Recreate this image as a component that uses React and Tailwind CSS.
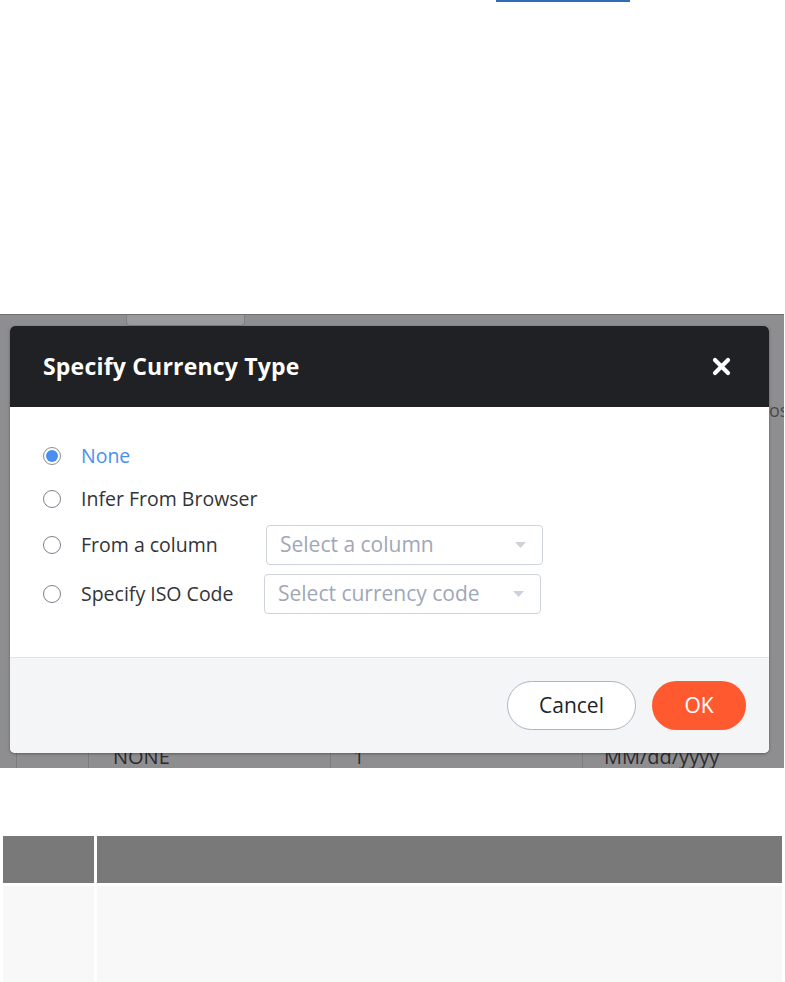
import React, { useState } from "react";

const font = { fontFamily: "'Open Sans', Lato, sans-serif" };

function Radio({ checked }) {
  return (
    <span
      className={
        "flex h-[18px] w-[18px] shrink-0 items-center justify-center rounded-full border-[1.5px] bg-white " +
        (checked ? "border-[#8a8d94]" : "border-[#7d818a]")
      }
    >
      {checked && <span className="h-[12px] w-[12px] rounded-full bg-[#4a8ff0]" />}
    </span>
  );
}

function Select({ placeholder, shift }) {
  return (
    <div
      className={
        "flex h-[40px] w-[277px] items-center justify-between rounded-[4px] border border-[#cfd3db] bg-white pl-[13px] pr-[16px] " +
        (shift ? "-ml-[2px]" : "")
      }
    >
      <span className="text-[21px] text-[#a0a7b8]">{placeholder}</span>
      <svg width="11" height="6" viewBox="0 0 11 6">
        <path d="M0 0h11L5.5 6z" fill="#cdd1d9" />
      </svg>
    </div>
  );
}

export default function App() {
  const [choice, setChoice] = useState("none");

  const options = [
    { id: "none", label: "None", cls: "h-[22px]" },
    { id: "browser", label: "Infer From Browser", cls: "mt-[21px] h-[22px]" },
    { id: "column", label: "From a column", select: "Select a column", cls: "mt-[15px] h-[40px]" },
    { id: "iso", label: "Specify ISO Code", select: "Select currency code", shift: true, cls: "mt-[9px] h-[40px]" },
  ];

  return (
    <div className="min-h-[982px] bg-white" style={font}>
      {/* link underline cut off at the top */}
      <div className="ml-[496px] h-[2px] w-[134px] bg-[#2f6db5]" />

      {/* screenshot of the dialog */}
      <div className="relative mt-[312px] h-[454px] w-[784px] overflow-hidden border-t border-[#6f6f72] bg-[#8e8e90]">
        {/* table behind the dialog */}
        <div className="flex h-full flex-col">
          <div className="ml-[126px] h-[11px] w-[119px] rounded-b-[4px] border-x border-b border-[#7d7d80] bg-[#9b9b9d]" />
          <div className="flex flex-1 justify-end pt-[75px]">
            <span className="w-[15px] overflow-hidden text-[18px] leading-none text-[#4a4a4c]">os</span>
          </div>
          <div className="flex h-[28px] items-end text-[20px] leading-none text-[#2b2b2e]">
            <div className="h-full w-[16px]" />
            <div className="h-full w-[72px] border-l border-[#7c7c7e]" />
            <div className="h-full w-[242px] border-l border-[#7c7c7e] pl-[24px] pt-[7px]">NONE</div>
            <div className="h-full w-[252px] border-l border-[#7c7c7e] pl-[22px] pt-[7px]">1</div>
            <div className="h-full flex-1 border-l border-[#7c7c7e] pl-[21px] pt-[7px]">MM/dd/yyyy</div>
          </div>
        </div>

        {/* dialog */}
        <div className="absolute left-[10px] top-[11px] flex h-[427px] w-[759px] flex-col overflow-hidden rounded-[5px] bg-white shadow-[0_1px_3px_rgba(0,0,0,0.35)]">
          <div className="flex h-[81px] shrink-0 items-center justify-between bg-[#202124] pl-[33px] pr-[38px]">
            <h2 className="text-[23px] font-bold tracking-[0.2px] text-white">Specify Currency Type</h2>
            <svg width="19" height="19" viewBox="0 0 19 19">
              <path d="M3 3l13 13M16 3L3 16" stroke="white" strokeWidth="4.2" strokeLinecap="round" />
            </svg>
          </div>

          <div className="flex flex-1 flex-col pl-[33px] pt-[38px]">
            {options.map((o) => (
              <div
                key={o.id}
                onClick={() => setChoice(o.id)}
                className={"flex cursor-pointer items-center " + o.cls}
              >
                <Radio checked={choice === o.id} />
                <span
                  className={
                    "ml-[20px] w-[185px] text-[19.5px] " +
                    (choice === o.id && o.id === "none" ? "text-[#4a8ff0]" : "text-[#333438]")
                  }
                >
                  {o.label}
                </span>
                {o.select && <Select placeholder={o.select} shift={o.shift} />}
              </div>
            ))}
          </div>

          <div className="flex h-[96px] shrink-0 items-center justify-end gap-[16px] border-t border-[#e1e3e8] bg-[#f4f5f7] pr-[23px]">
            <button className="h-[49px] w-[129px] rounded-full border border-[#aeb4c4] bg-white text-[21px] text-[#222326]">
              Cancel
            </button>
            <button className="h-[49px] w-[94px] rounded-full bg-[#ff5a2f] text-[21px] text-white">OK</button>
          </div>
        </div>
      </div>

      {/* table below */}
      <table className="mt-[65px] w-[785px] border-separate border-spacing-[3px]">
        <thead>
          <tr className="h-[47px]">
            <th className="w-[91px] bg-[#797979]" />
            <th className="bg-[#797979]" />
          </tr>
        </thead>
        <tbody>
          <tr className="h-[100px]">
            <td className="bg-[#f8f8f8]" />
            <td className="bg-[#f8f8f8]" />
          </tr>
        </tbody>
      </table>
    </div>
  );
}
